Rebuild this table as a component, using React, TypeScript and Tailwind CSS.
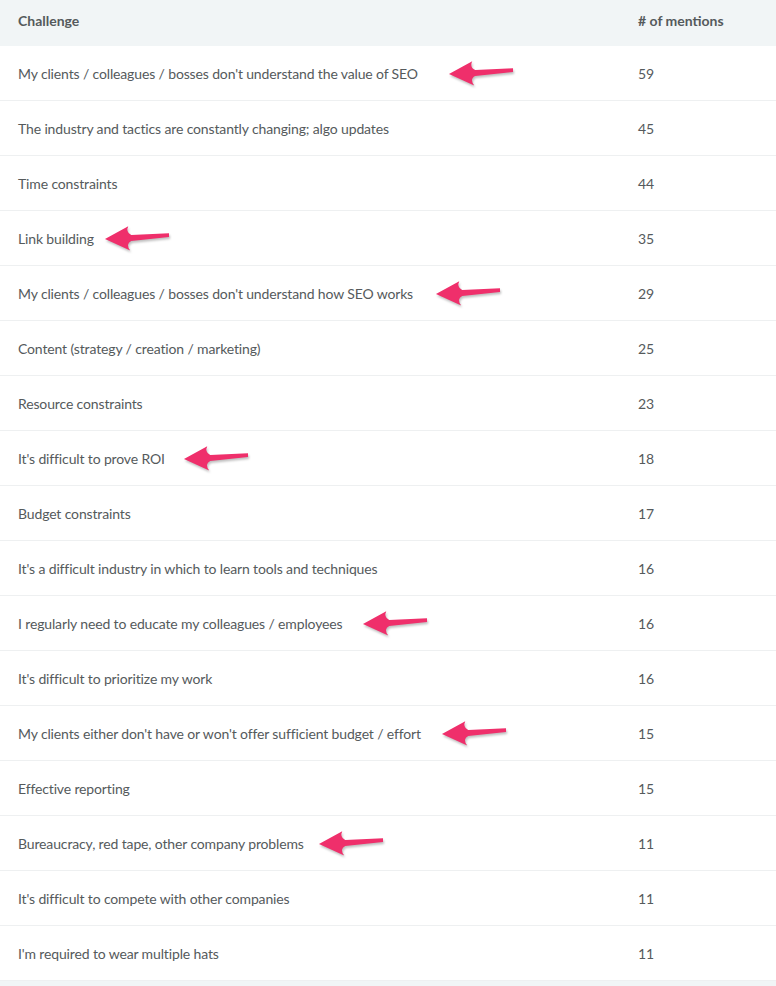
const rows: { label: string; count: number; arrow?: number }[] = [
  { label: "My clients / colleagues / bosses don't understand the value of SEO", count: 59, arrow: 30 },
  { label: "The industry and tactics are constantly changing; algo updates", count: 45 },
  { label: "Time constraints", count: 44 },
  { label: "Link building", count: 35, arrow: 10 },
  { label: "My clients / colleagues / bosses don't understand how SEO works", count: 29, arrow: 22 },
  { label: "Content (strategy / creation / marketing)", count: 25 },
  { label: "Resource constraints", count: 23 },
  { label: "It's difficult to prove ROI", count: 18, arrow: 18 },
  { label: "Budget constraints", count: 17 },
  { label: "It's a difficult industry in which to learn tools and techniques", count: 16 },
  { label: "I regularly need to educate my colleagues / employees", count: 16, arrow: 19 },
  { label: "It's difficult to prioritize my work", count: 16 },
  { label: "My clients either don't have or won't offer sufficient budget / effort", count: 15, arrow: 20 },
  { label: "Effective reporting", count: 15 },
  { label: "Bureaucracy, red tape, other company problems", count: 11, arrow: 14 },
  { label: "It's difficult to compete with other companies", count: 11 },
  { label: "I'm required to wear multiple hats", count: 11 },
]

const Arrow = () => (
  <svg width="66" height="28" viewBox="0 0 68 28" className="drop-shadow-[1px_2px_1px_rgba(0,0,0,0.25)]">
    <path
      d="M1 15 L25 2 Q22 8 28 11 L67 9 L67 13 L28 17 Q22 20 27 27 Z"
      fill="#ef2f6b"
    />
  </svg>
)

export default function App() {
  return (
    <div className="w-[776px] h-[986px] bg-white font-['Lato','Open_Sans',sans-serif] text-[14px] tracking-[-0.14px] text-[#555a5c]">
      <div className="flex h-[46px] items-start pt-[10px] bg-[#f1f5f6] font-bold tracking-normal">
        <div className="w-[638px] pl-[18px]">Challenge</div>
        <div>#&nbsp;of mentions</div>
      </div>
      {rows.map((r) => (
        <div key={r.label} className="flex h-[55px] items-center border-b border-[#eef0f1]">
          <div className="w-[638px] pl-[18px] flex items-center">
            <span>{r.label}</span>
            {r.arrow !== undefined && (
              <span className="flex" style={{ marginLeft: r.arrow }}>
                <Arrow />
              </span>
            )}
          </div>
          <div>{r.count}</div>
        </div>
      ))}
      <div className="h-[5px] bg-[#f1f5f6]" />
    </div>
  )
}
